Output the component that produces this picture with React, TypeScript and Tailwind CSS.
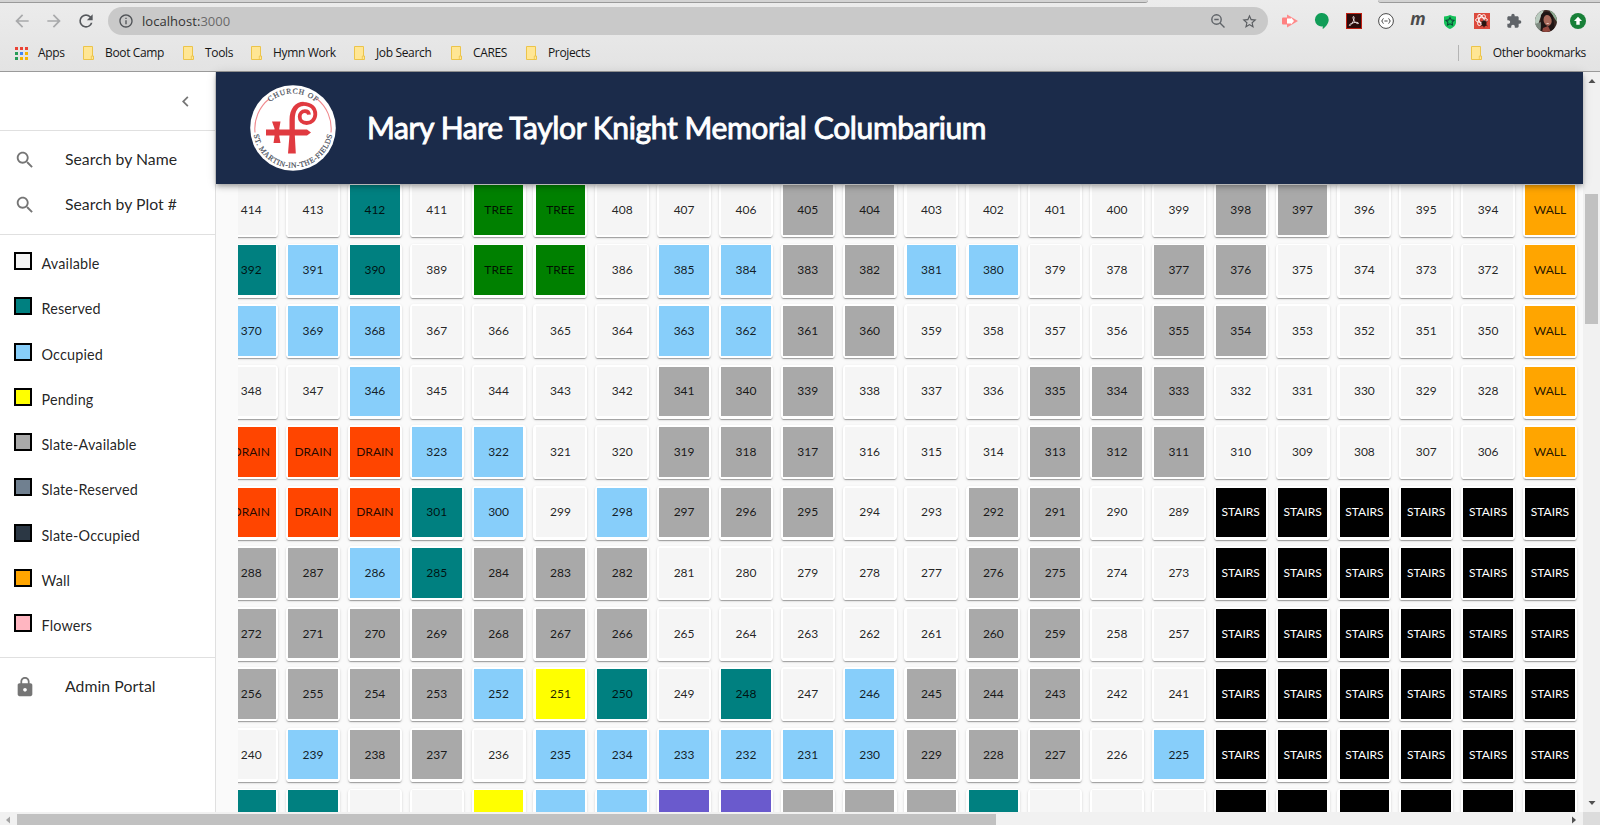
import React from "react";

const FILL: Record<string, string> = {
  A: "bg-[#f5f5f5]",
  R: "bg-[#008080]",
  O: "bg-[#87cefa]",
  P: "bg-[#ffff00]",
  S: "bg-[#a9a9a9]",
  T: "bg-[#008000]",
  D: "bg-[#ff4500]",
  W: "bg-[#ffa500]",
  V: "bg-[#6a5acd]",
  X: "bg-black",
};
const LABEL: Record<string, string> = { T: "TREE", D: "DRAIN", W: "WALL", X: "STAIRS" };

// First plot number of the row (null for an unlabelled row) and one code per plot.
const ROWS: [number | null, string][] = [
  [414, "AARATTAAASSAAAAASSAAAW"],
  [392, "RORATTAOOSSOOAASSAAAAW"],
  [370, "OOOAAAAOOSSAAAASSAAAAW"],
  [348, "AAOAAAASSSAAASSSAAAAAW"],
  [326, "DDDOOAASSSAAASSSAAAAAW"],
  [304, "DDDROAOSSSAASSAAXXXXXX"],
  [288, "SSORSSSAAAAASSAAXXXXXX"],
  [272, "SSSSSSSAAAAASSAAXXXXXX"],
  [256, "SSSSOPRARAOSSSAAXXXXXX"],
  [240, "AOSSAOOOOOOSSSAOXXXXXX"],
  [null, "RRAAPOOVVSSSRAAAXXXXXX"],
];

const LEGEND: [string, string][] = [
  ["Available", "bg-[#f5f5f5]"],
  ["Reserved", "bg-[#008080]"],
  ["Occupied", "bg-[#87cefa]"],
  ["Pending", "bg-[#ffff00]"],
  ["Slate-Available", "bg-[#a9a9a9]"],
  ["Slate-Reserved", "bg-[#708090]"],
  ["Slate-Occupied", "bg-[#2b3744]"],
  ["Wall", "bg-[#ffa500]"],
  ["Flowers", "bg-[#ffb6c1]"],
];

const BOOKMARKS: [string, string][] = [
  ["Boot Camp", "w-[100px]"],
  ["Tools", "w-[68px]"],
  ["Hymn Work", "w-[103px]"],
  ["Job Search", "w-[97px]"],
  ["CARES", "w-[75px]"],
  ["Projects", "w-[80px]"],
];

function Icon({ d, className }: { d: string; className: string }) {
  return (
    <svg viewBox="0 0 24 24" className={`shrink-0 ${className}`} fill="currentColor">
      <path d={d} />
    </svg>
  );
}

const BACK = "M20 11H7.83l5.59-5.59L12 4l-8 8 8 8 1.41-1.41L7.83 13H20v-2z";
const FORWARD = "M12 4l-1.41 1.41L16.17 11H4v2h12.17l-5.58 5.59L12 20l8-8z";
const RELOAD =
  "M17.65 6.35A7.958 7.958 0 0 0 12 4a8 8 0 1 0 7.73 10h-2.08A5.99 5.99 0 0 1 12 18c-3.31 0-6-2.69-6-6s2.69-6 6-6c1.66 0 3.14.69 4.22 1.78L13 11h7V4l-2.35 2.35z";
const INFO =
  "M11 7h2v2h-2zm0 4h2v6h-2zm1-9C6.48 2 2 6.48 2 12s4.48 10 10 10 10-4.48 10-10S17.52 2 12 2zm0 18c-4.41 0-8-3.59-8-8s3.59-8 8-8 8 3.59 8 8-3.59 8-8 8z";
const SEARCH =
  "M15.5 14h-.79l-.28-.27C15.41 12.59 16 11.11 16 9.5 16 5.91 13.09 3 9.5 3S3 5.91 3 9.5 5.91 16 9.5 16c1.61 0 3.09-.59 4.23-1.57l.27.28v.79l5 4.99L20.49 19l-4.99-5zm-6 0C7.01 14 5 11.99 5 9.5S7.01 5 9.5 5 14 7.01 14 9.5 11.99 14 9.5 14z";
const STAR =
  "M22 9.24l-7.19-.62L12 2 9.19 8.63 2 9.24l5.46 4.73L5.82 21 12 17.27 18.18 21l-1.63-7.03L22 9.24zM12 15.4l-3.76 2.27 1-4.28-3.32-2.88 4.38-.38L12 6.1l1.71 4.04 4.38.38-3.32 2.88 1 4.28L12 15.4z";
const PUZZLE =
  "M20.5 11H19V7c0-1.1-.9-2-2-2h-4V3.5a2.5 2.5 0 0 0-5 0V5H4c-1.1 0-2 .9-2 2v3.8h1.5c1.5 0 2.7 1.2 2.7 2.7S5 16.2 3.5 16.2H2V20c0 1.1.9 2 2 2h3.8v-1.5c0-1.5 1.2-2.7 2.7-2.7s2.7 1.2 2.7 2.7V22H17c1.1 0 2-.9 2-2v-4h1.5a2.5 2.5 0 0 0 0-5z";
const CHEVRON = "M15.41 7.41L14 6l-6 6 6 6 1.41-1.41L10.83 12z";
const LOCK =
  "M18 8h-1V6c0-2.76-2.24-5-5-5S7 3.24 7 6v2H6c-1.1 0-2 .9-2 2v10c0 1.1.9 2 2 2h12c1.1 0 2-.9 2-2V10c0-1.1-.9-2-2-2zm-6 9c-1.1 0-2-.9-2-2s.9-2 2-2 2 .9 2 2-.9 2-2 2zm3.1-9H8.9V6c0-1.71 1.39-3.1 3.1-3.1s3.1 1.39 3.1 3.1v2z";

function Folder() {
  return (
    <svg viewBox="0 0 12 14" className="h-[14px] w-[12px] shrink-0">
      <path d="M.5.5h9v9.500h1v3.500H.5z" fill="#ffe694" stroke="#ecc44a" />
      <path d="M8.300 13.500V10h1.500" fill="none" stroke="#ecc44a" strokeWidth=".8" />
    </svg>
  );
}

function Extensions() {
  return (
    <div className="ml-[6px] flex w-[320px] shrink-0 items-center">
      <div className="flex w-8 justify-center">
        <svg viewBox="0 0 16 16" className="h-4 w-4">
          <rect x="0" y="4.5" width="6" height="7" rx="1" fill="#ff8080" />
          <path d="M5 1.5L16 8 5 14.500z" fill="#ff8a8a" />
          <path d="M5 5.500h4V4.500L12 8l-3 3.500v-1H5z" fill="#fff" />
        </svg>
      </div>
      <div className="flex w-8 justify-center">
        <svg viewBox="0 0 16 16" className="h-4 w-4">
          <path d="M8 0a6.700 6.700 0 0 1 6.700 6.700c0 3.500-2.600 7-6 9.300v-2.700A6.700 6.700 0 1 1 8 0z" fill="#119d58" />
        </svg>
      </div>
      <div className="flex w-8 justify-center">
        <svg viewBox="0 0 16 16" className="h-4 w-4">
          <rect x=".5" y=".5" width="15" height="15" fill="#2c0b0b" stroke="#c01f12" />
          <path
            d="M7.300 3.500c1.500 0 .8 3-.3 5.200-1 2-2.500 4-3.500 3.800-1-.4 1-2 3.700-2.700 2.500-.7 5.500-.6 5.300.5-.3 1-2.800-.3-4-2C7.300 6.800 6.500 4 7.300 3.500z"
            fill="none"
            stroke="#f5eaea"
            strokeWidth=".9"
          />
        </svg>
      </div>
      <div className="flex w-8 justify-center">
        <svg viewBox="0 0 16 16" className="h-4 w-4" fill="none" stroke="#4a4a4a">
          <circle cx="8" cy="8" r="7.400" fill="#fff" />
          <path d="M5.500 5.500c-1.200 0-.6 2.500-1.900 2.500 1.300 0 .7 2.500 1.900 2.500M10.500 5.500c1.200 0 .6 2.500 1.900 2.500-1.300 0-.7 2.500-1.900 2.500M6.400 8h3.200" />
        </svg>
      </div>
      <div className="flex w-8 justify-center pb-[5px] font-['Open_Sans'] text-[17px] leading-4 font-bold text-[#4b4b4b] italic">m</div>
      <div className="flex w-8 justify-center">
        <svg viewBox="0 0 16 16" className="h-4 w-4">
          <path d="M2 3.500c2.500 0 4.500-.8 6-1.500 1.500.7 3.500 1.500 6 1.500V9c0 3.500-2.500 5.500-6 7-3.500-1.500-6-3.500-6-7z" fill="#15c15a" />
          <path d="M8 4.500l1.300 2.400 2.700.4-1.900 1.900.4 2.800L8 10.800 5.500 12l.4-2.800L4 7.300l2.700-.4z" fill="none" stroke="#0c4a38" strokeWidth="1.100" />
        </svg>
      </div>
      <div className="flex w-8 justify-center">
        <svg viewBox="0 0 16 16" className="h-4 w-4">
          <rect width="16" height="16" fill="#dc4a3d" />
          <g fill="none" stroke="#fff" strokeWidth=".9">
            <ellipse cx="7.500" cy="7" rx="6" ry="2.400" />
            <ellipse cx="7.500" cy="7" rx="6" ry="2.400" transform="rotate(60 7.5 7)" />
            <ellipse cx="7.500" cy="7" rx="6" ry="2.400" transform="rotate(120 7.5 7)" />
          </g>
          <ellipse cx="10" cy="10.500" rx="2.500" ry="3" fill="#2b1512" />
          <path d="M6.500 8l7 5M13.500 8l-7 5.500M10 6.500v8" stroke="#2b1512" strokeWidth=".8" />
        </svg>
      </div>
      <div className="flex w-8 justify-center">
        <Icon d={PUZZLE} className="h-4 w-4 text-[#5f6368]" />
      </div>
      <div className="flex w-8 justify-center">
        <svg viewBox="0 0 22 22" className="h-[22px] w-[22px]">
          <clipPath id="avatar">
            <circle cx="11" cy="11" r="11" />
          </clipPath>
          <g clipPath="url(#avatar)">
            <rect width="22" height="22" fill="#3a2722" />
            <path d="M0 0h9L5 9l-3 9-2 1z" fill="#b9cbbf" />
            <path d="M0 14l6-2 1 8-3 2H0z" fill="#7d8a80" />
            <path d="M14 0h8v12l-4-6z" fill="#8fae94" />
            <path d="M6 5c2-4 9-5 12 1l2 16H5c2-5 0-12 1-17z" fill="#1f1514" />
            <ellipse cx="12.500" cy="10.500" rx="4" ry="5.500" fill="#a8695a" transform="rotate(-12 12 10)" />
            <path d="M8 18l5-2 3 6H7z" fill="#93483f" />
            <path d="M11 13.300c1 1 2.500.8 3.300-.4z" fill="#f4dcd6" />
          </g>
        </svg>
      </div>
      <div className="flex w-8 justify-center">
        <svg viewBox="0 0 16 16" className="h-4 w-4">
          <circle cx="8" cy="8" r="8" fill="#188038" />
          <path d="M8 3.800l4 4.200H9.700v3.700H6.300V8H4z" fill="#fff" />
        </svg>
      </div>
    </div>
  );
}

function BrowserChrome() {
  return (
    <div className="flex h-[72px] w-[1600px] shrink-0 flex-col border-b border-[#9a9a9a] bg-linear-to-b from-[#ececec] to-[#e3e3e3]">
      <div className="flex h-[3px] shrink-0 justify-between">
        <div className="w-[1148px] rounded-br-[4px] border-b border-[#9a9a9a] bg-[#d3d3d3]" />
        <div className="w-[222px] rounded-bl-[4px] border-b border-[#9a9a9a] bg-[#d3d3d3]" />
      </div>
      <div className="flex h-[36px] shrink-0 items-center pl-3">
        <Icon d={BACK} className="h-5 w-5 text-[#a8a9ab]" />
        <Icon d={FORWARD} className="ml-3 h-5 w-5 text-[#a8a9ab]" />
        <Icon d={RELOAD} className="ml-3 h-5 w-5 text-[#55585c]" />
        <div className="ml-[12px] flex h-7 w-[1160px] shrink-0 items-center rounded-full bg-[#c9c9c9] pr-[10px] pl-[10px]">
          <Icon d={INFO} className="h-4 w-4 text-[#505357]" />
          <div className="ml-[8px] flex-1 pt-px font-['Open_Sans'] text-[13px] tracking-[0.05px] text-[#333]">
            localhost:<span className="text-[#6a6a6a]">3000</span>
          </div>
          <svg viewBox="0 0 16 16" className="mr-[15px] h-4 w-4" fill="none" stroke="#5f6368" strokeWidth="1.400">
            <circle cx="6.500" cy="6.500" r="4.700" />
            <path d="M10 10l4.500 4.500M4.300 6.500h4.400" />
          </svg>
          <Icon d={STAR} className="h-[17px] w-[17px] text-[#5a5d61]" />
        </div>
        <Extensions />
      </div>
      <div className="flex flex-1 items-center pb-[4px] pl-[15px] font-['Open_Sans'] text-[12px] tracking-[-0.35px] text-[#161616]">
        <div className="grid h-[13px] w-[13px] grid-cols-3 gap-[2px]">
          <i className="bg-[#ea4335]" />
          <i className="bg-[#ea4335]" />
          <i className="bg-[#ea4335]" />
          <i className="bg-[#279c57]" />
          <i className="bg-[#4285f4]" />
          <i className="bg-[#f5b400]" />
          <i className="bg-[#279c57]" />
          <i className="bg-[#f5b400]" />
          <i className="bg-[#f5b400]" />
        </div>
        <div className="ml-[10px] w-[45px]">Apps</div>
        {BOOKMARKS.map(([name, w]) => (
          <div key={name} className={`flex items-center gap-[10px] whitespace-nowrap ${w}`}>
            <Folder />
            {name}
          </div>
        ))}
        <div className="mr-[14px] ml-auto flex items-center whitespace-nowrap">
          <div className="mr-[12px] h-4 w-px bg-[#b4b4b4]" />
          <Folder />
          <span className="ml-[10px]">Other bookmarks</span>
        </div>
      </div>
    </div>
  );
}

function Logo() {
  return (
    <svg viewBox="0 0 86 86" className="h-[86px] w-[86px] shrink-0">
      <defs>
        <path id="arcTop" d="M8.500 43a34.500 34.500 0 0 1 69 0" />
        <path id="arcBottom" d="M3.200 43a39.800 39.800 0 0 0 79.600 0" />
      </defs>
      <circle cx="43" cy="43" r="42.800" fill="#fff" />
      <path d="M5 47.500A38.200 38.200 0 0 1 19 14M81 47.500A38.200 38.200 0 0 0 66.500 13.500" fill="none" stroke="#f08a8e" strokeWidth="1.100" />
      <g fontFamily="Liberation Serif, serif" fontSize="7.600" fill="#4a4f5a" textAnchor="middle" stroke="#4a4f5a" strokeWidth=".2">
        <text textLength="50">
          <textPath href="#arcTop" startOffset="50%">CHURCH OF</textPath>
        </text>
        <text textLength="111">
          <textPath href="#arcBottom" startOffset="50%">ST. MARTIN-IN-THE-FIELDS</textPath>
        </text>
      </g>
      <g fill="#e03a40">
        <path d="M38 68.500L39.500 50V35c0-11.500 6-18.300 14-18.300v4.300c-5.500 0-8.700 5-8.700 14v15l1 18.500z" />
        <path d="M16 44.500h41l4 3-4 2.900H16z" />
        <path d="M22 36.500h8.500l-1.200 7v8l1.200 6.500h-7l1-6.500v-8z" />
      </g>
      <path
        d="M53 18.800c8.500 0 12.300 5 12.300 10.400 0 5.200-4 8.800-8.600 8.800-4.500 0-7-3-7-6.300 0-3.200 2.300-5.500 5.200-5.500 2.200 0 3.900 1.300 4.100 3.400"
        fill="none"
        stroke="#e03a40"
        strokeWidth="3.800"
      />
    </svg>
  );
}

function Sidebar() {
  return (
    <aside className="flex w-[216px] shrink-0 flex-col border-r border-[#e0e0e0] bg-white text-black/87">
      <div className="flex h-[59px] shrink-0 items-center justify-end border-b border-[#e0e0e0] pr-[19px]">
        <Icon d={CHEVRON} className="h-[21px] w-[21px] text-black/54" />
      </div>
      <div className="flex h-[104px] shrink-0 flex-col border-b border-[#e0e0e0] pt-[6px]">
        {["Search by Name", "Search by Plot #"].map((t) => (
          <div key={t} className="flex h-[45px] items-center pl-[14px] text-[15.8px]">
            <Icon d={SEARCH} className="h-[22px] w-[22px] text-black/54" />
            <span className="ml-[29px] pb-[2px]">{t}</span>
          </div>
        ))}
      </div>
      <div className="flex h-[423px] shrink-0 flex-col border-b border-[#e0e0e0] pt-[17px] pl-[14px]">
        {LEGEND.map(([name, bg]) => (
          <div key={name} className="flex h-[45.3px] shrink-0 gap-[9.5px]">
            <div className={`h-[18px] w-[18px] border-2 border-black ${bg}`} />
            <span className="mt-[2px] text-[14.4px] leading-[20px] tracking-[0.15px]">{name}</span>
          </div>
        ))}
      </div>
      <div className="flex h-[58px] items-center pl-[14px] text-[15.8px]">
        <Icon d={LOCK} className="h-[22px] w-[22px] text-black/54" />
        <span className="ml-[29px] pb-[2px] tracking-[0.05px]">Admin Portal</span>
      </div>
    </aside>
  );
}

function Plot({ code, number }: { code: string; number: number | null }) {
  return (
    <div className="h-[54px] w-[54px] shrink-0 rounded-[3.6px] bg-white px-[2.2px] pt-[1.8px] pb-[2.6px] shadow-[0_2px_1px_-1px_rgba(0,0,0,0.2),0_1px_1px_0_rgba(0,0,0,0.14),0_1px_3px_0_rgba(0,0,0,0.12)]">
      <div className={`flex h-full w-full items-center justify-center text-[12px] text-black/87 ${FILL[code]}`}>
        {number !== null && <span className={code === "X" ? "text-white" : ""}>{LABEL[code] ?? number}</span>}
      </div>
    </div>
  );
}

function Arrow({ points }: { points: string }) {
  return (
    <svg viewBox="0 0 8 8" className="h-2 w-2 shrink-0" fill="#505050">
      <polygon points={points} />
    </svg>
  );
}

export default function App() {
  return (
    <div className="flex h-[825px] w-[1606px] flex-col overflow-hidden bg-white font-['Lato',sans-serif]">
      <BrowserChrome />
      <div className="flex h-[740px] w-[1600px] shrink-0">
        <Sidebar />
        <main className="flex w-[1367px] flex-col bg-[#fafafa]">
          <header className="z-10 flex h-[112px] shrink-0 items-center bg-[#1b2b4a] pl-[34px] shadow-[0_2px_4px_-1px_rgba(0,0,0,0.2),0_4px_5px_0_rgba(0,0,0,0.14),0_1px_10px_0_rgba(0,0,0,0.12)]">
            <Logo />
            <h1 className="ml-[31px] pb-[2px] text-[30px] leading-none tracking-[-0.38px] whitespace-nowrap text-white [-webkit-text-stroke:0.9px_white]">
              Mary Hare Taylor Knight Memorial Columbarium
            </h1>
          </header>
          <div className="ml-[22px] flex-1 overflow-hidden">
            <div className="-mt-[0.9px] -ml-[13.8px] flex flex-col gap-[6.55px]">
              {ROWS.map(([start, codes], r) => (
                <div key={r} className="flex gap-[7.85px]">
                  {codes.split("").map((c, i) => (
                    <Plot key={i} code={c} number={start === null ? null : start - i} />
                  ))}
                </div>
              ))}
            </div>
          </div>
        </main>
        <div className="flex w-[17px] shrink-0 flex-col items-center bg-[#f1f1f1] pt-[5px] pb-[5px]">
          <Arrow points="0.5,6 7.5,6 4,2" />
          <div className="mt-[109px] mb-auto h-[130px] w-[13px] bg-[#c1c1c1]" />
          <Arrow points="0.5,2 7.5,2 4,6" />
        </div>
      </div>
      <div className="flex h-[13px] w-[1600px] shrink-0">
        <div className="flex w-[1583px] items-start justify-between bg-[#f1f1f1] pt-[2px] pr-[5px] pl-[4px]">
          <div className="flex pt-[2px]">
            <svg viewBox="0 0 8 8" className="h-2 w-2" fill="#a3a3a3">
              <polygon points="6,0.5 6,7.5 2,4" />
            </svg>
          </div>
          <div className="mr-auto ml-[5px] h-[11px] w-[979px] bg-[#c1c1c1]" />
          <div className="pt-[2px]">
            <Arrow points="2,0.5 2,7.5 6,4" />
          </div>
        </div>
        <div className="w-[17px] bg-[#dcdcdc]" />
      </div>
    </div>
  );
}
